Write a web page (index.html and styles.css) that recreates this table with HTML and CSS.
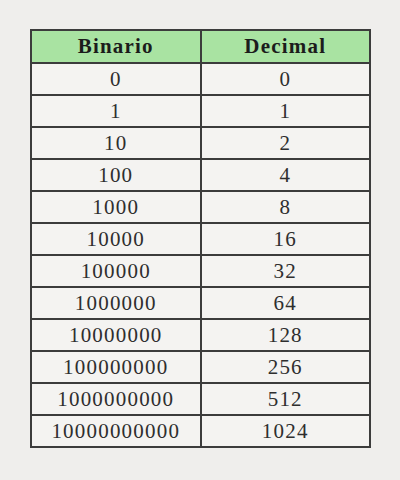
FILE: index.html
```html
<!DOCTYPE html>
<html>
<head>
<meta charset="utf-8">
<link rel="stylesheet" href="styles.css">
</head>
<body>
<table class="tabla">
<thead>
<tr><th class="col">Binario</th><th class="col">Decimal</th></tr>
</thead>
<tbody>
<tr><td>0</td><td>0</td></tr>
<tr><td>1</td><td>1</td></tr>
<tr><td>10</td><td>2</td></tr>
<tr><td>100</td><td>4</td></tr>
<tr><td>1000</td><td>8</td></tr>
<tr><td>10000</td><td>16</td></tr>
<tr><td>100000</td><td>32</td></tr>
<tr><td>1000000</td><td>64</td></tr>
<tr><td>10000000</td><td>128</td></tr>
<tr><td>100000000</td><td>256</td></tr>
<tr><td>1000000000</td><td>512</td></tr>
<tr><td>10000000000</td><td>1024</td></tr>
</tbody>
</table>
</body>
</html>
```
FILE: styles.css
```css
html, body {
  margin: 0;
  padding: 0;
  background: #efeeec;
  width: 400px;
  height: 480px;
}
body {
  padding-top: 29px;
  padding-left: 30px;
  box-sizing: border-box;
}
.tabla {
  border-collapse: collapse;
  table-layout: fixed;
  width: 341px;
  font-family: "Liberation Serif", "Times New Roman", serif;
  font-size: 21px;
  color: #2e2e2e;
  background: #f4f3f1;
}
.tabla th, .tabla td {
  border: 2px solid #3c3c3c;
  text-align: center;
  padding: 0;
  letter-spacing: 1.2px;
  line-height: 1;
}
.tabla th {
  height: 31px;
  background: #a9e3a2;
  color: #1c1c1c;
  font-weight: bold;
}
.tabla td {
  height: 30px;
}
.tabla .col {
  width: 50%;
}
```
